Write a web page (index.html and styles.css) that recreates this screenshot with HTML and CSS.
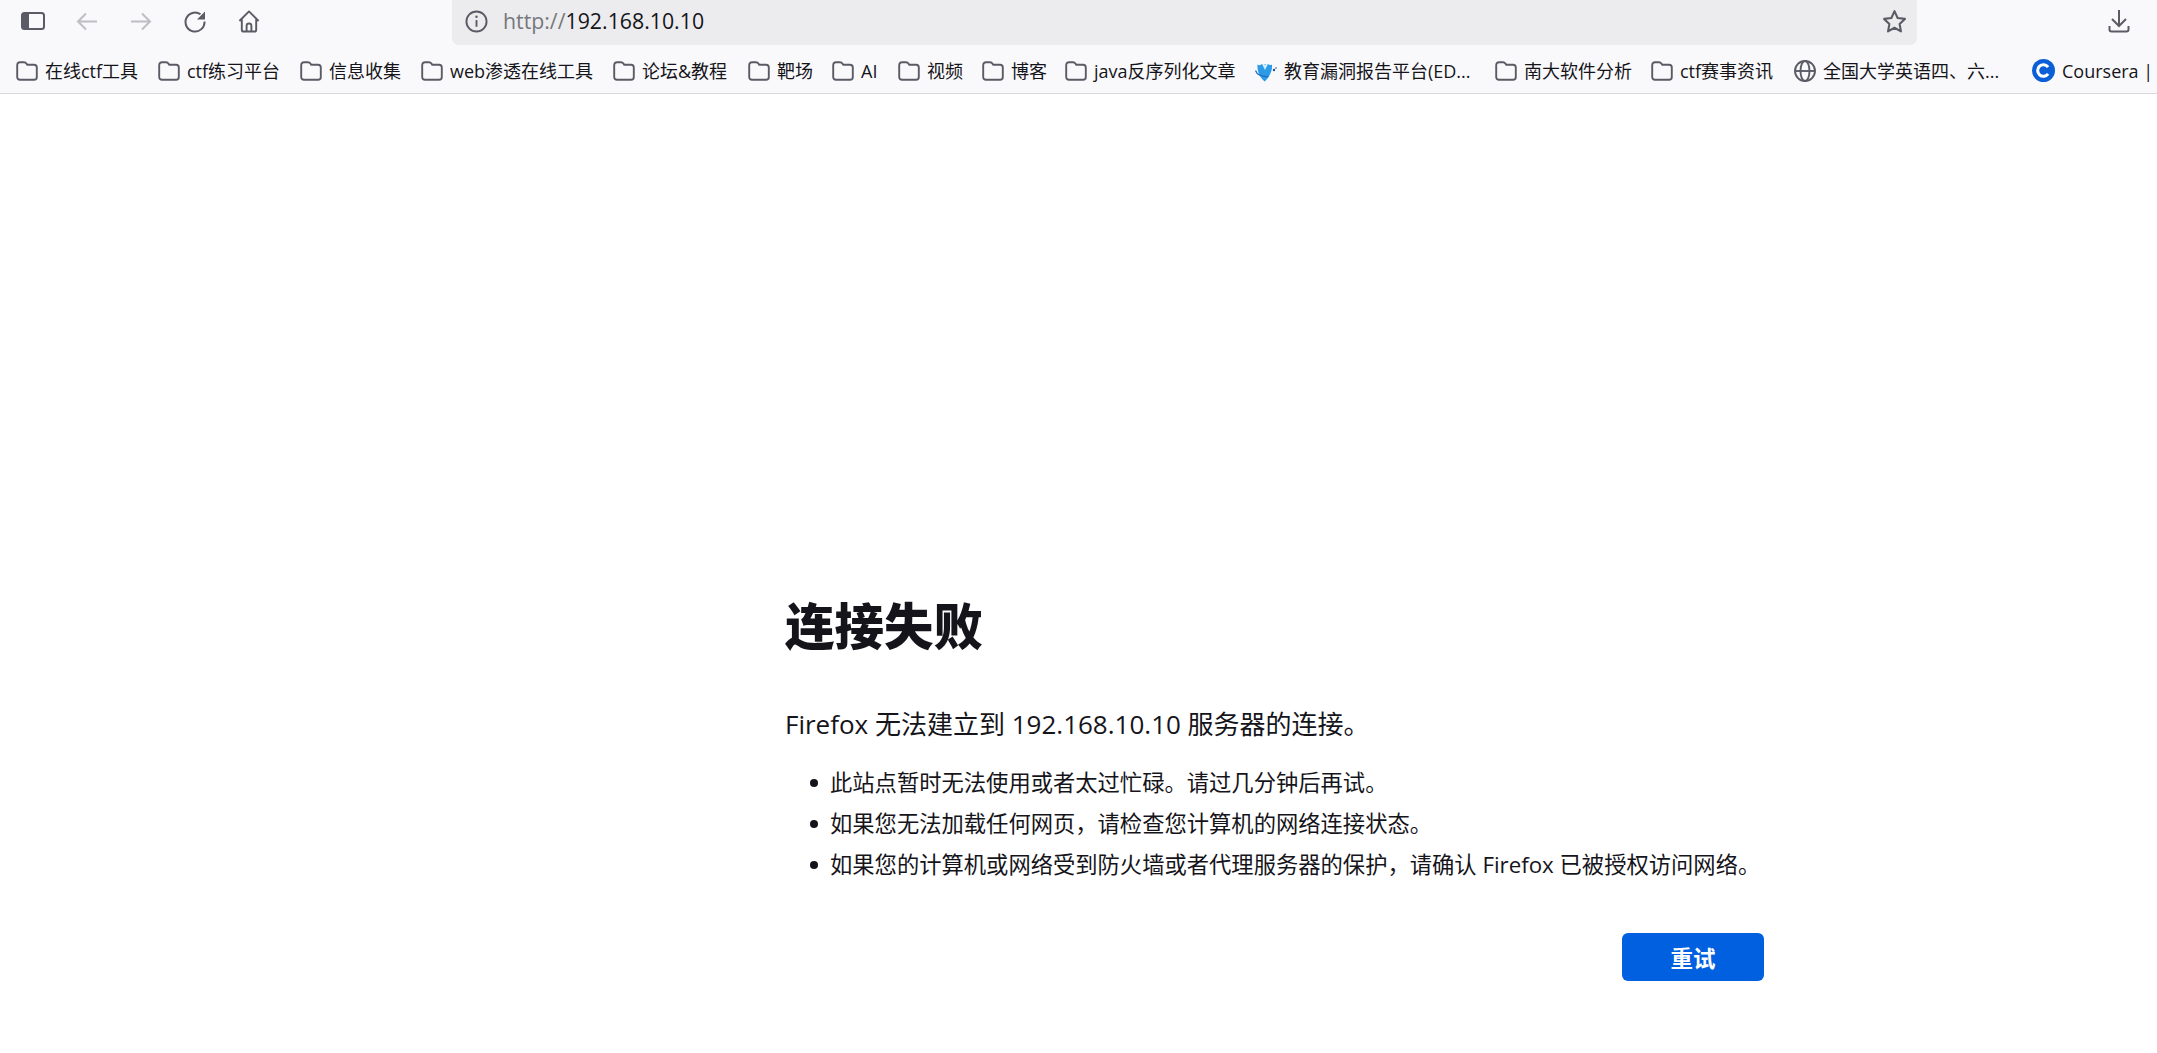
FILE: index.html
```html
<!DOCTYPE html>
<html lang="zh-CN">
<head>
<meta charset="utf-8">
<title>连接失败</title>
<link rel="stylesheet" href="styles.css">
</head>
<body>
<svg class="defs" width="0" height="0" aria-hidden="true">
  <symbol id="folder" viewBox="0 0 22 20">
    <path d="M1.2 4.2C1.2 2.4 2.4 1.2 4 1.2h4c1.2 0 1.9.5 2.6 1.6l.5.9h7c1.700 0 2.700 1.100 2.700 2.800v9.500c0 1.700-1.100 2.800-2.800 2.800H4c-1.700 0-2.800-1.100-2.800-2.800z" fill="none" stroke="#5b5b66" stroke-width="1.900" stroke-linejoin="round"/>
  </symbol>
</svg>
<header class="toolbar">
  <div class="nav">
    <svg class="ico sidebar" viewBox="0 0 24 18"><rect x="1" y="1" width="22" height="16" rx="2.500" fill="none" stroke="#5b5b66" stroke-width="2"/><path d="M2 2h6v14H2z" fill="#5b5b66"/></svg>
    <svg class="ico" viewBox="0 0 22 22"><path d="M21 11H2M10 3l-8 8 8 8" fill="none" stroke="#bebec3" stroke-width="2"/></svg>
    <svg class="ico" viewBox="0 0 22 22"><path d="M1 11h19M12 3l8 8-8 8" fill="none" stroke="#bebec3" stroke-width="2"/></svg>
    <svg class="ico" viewBox="0 0 22 22"><path d="M16.500 3.800A9.500 9.500 0 1 0 20.500 11" fill="none" stroke="#5b5b66" stroke-width="2"/><path d="M21 1v8h-8z" fill="#5b5b66"/></svg>
    <svg class="ico" viewBox="0 0 22 24"><path d="M1 11.500 11 1.500l10 10M3.500 9.500v11c0 1.200.8 2 2 2h11c1.200 0 2-.8 2-2v-11" fill="none" stroke="#5b5b66" stroke-width="2" stroke-linejoin="round"/><path d="M8.500 22v-5.500c0-1.500 1-2.500 2.500-2.500s2.500 1 2.500 2.500V22" fill="none" stroke="#5b5b66" stroke-width="2"/></svg>
  </div>
  <div class="urlbar">
    <svg class="info" viewBox="0 0 24 24"><circle cx="12" cy="12" r="10.500" fill="none" stroke="#5b5b66" stroke-width="2"/><path d="M12 10.500v7" stroke="#5b5b66" stroke-width="2"/><circle cx="12" cy="7" r="1.300" fill="#5b5b66"/></svg>
    <span class="url"><span class="scheme">http://</span>192.168.10.10</span>
    <svg class="star" viewBox="0 0 24 24"><path d="M12 2l3 6.600 7 .9-5.100 4.900 1.300 7.100L12 18l-6.200 3.500 1.300-7.100L2 9.500l7-.9z" fill="none" stroke="#5b5b66" stroke-width="2" stroke-linejoin="round"/></svg>
  </div>
  <svg class="download" viewBox="0 0 22 24"><path d="M11 1v15M4 10l7 7 7-7M1.500 17v3.500c0 1.200.8 2 2 2h15c1.200 0 2-.8 2-2V17" fill="none" stroke="#5b5b66" stroke-width="2"/></svg>
</header>
<nav class="bookmarks">
  <a class="bm b1"><svg class="fld"><use href="#folder"/></svg><span>在线ctf工具</span></a>
  <a class="bm b2"><svg class="fld"><use href="#folder"/></svg><span>ctf练习平台</span></a>
  <a class="bm b3"><svg class="fld"><use href="#folder"/></svg><span>信息收集</span></a>
  <a class="bm b4"><svg class="fld"><use href="#folder"/></svg><span>web渗透在线工具</span></a>
  <a class="bm b5"><svg class="fld"><use href="#folder"/></svg><span>论坛&amp;教程</span></a>
  <a class="bm b6"><svg class="fld"><use href="#folder"/></svg><span>靶场</span></a>
  <a class="bm b7"><svg class="fld"><use href="#folder"/></svg><span>AI</span></a>
  <a class="bm b8"><svg class="fld"><use href="#folder"/></svg><span>视频</span></a>
  <a class="bm b9"><svg class="fld"><use href="#folder"/></svg><span>博客</span></a>
  <a class="bm b10"><svg class="fld"><use href="#folder"/></svg><span>java反序列化文章</span></a>
  <a class="bm b11"><svg class="fav" viewBox="0 0 22 22"><path d="M2.500 4.500c1.500 1 3.500.8 4.500-.5 1 1.200 2.500 1.200 3 0 1 1.200 2.500 1.200 3 0 1 1.200 2.500 1.500 4 .5.500 6-2 12-7.200 17C4.500 17.500 2 10.500 2.500 4.500z" fill="#2b9be8"/><path d="M7.500 5l2.500 5 2.500-5z" fill="#d5eefc"/><path d="M.5 10.500c1 4 6 6.500 13 6" fill="none" stroke="#1f6fc4" stroke-width="1.300"/><circle cx="19" cy="10" r="1.200" fill="#1c4f9c"/><circle cx="21" cy="8" r=".8" fill="#1c4f9c"/></svg><span>教育漏洞报告平台(ED...</span></a>
  <a class="bm b12"><svg class="fld"><use href="#folder"/></svg><span>南大软件分析</span></a>
  <a class="bm b13"><svg class="fld"><use href="#folder"/></svg><span>ctf赛事资讯</span></a>
  <a class="bm b14"><svg class="fav" viewBox="0 0 22 22"><g fill="none" stroke="#5b5b66" stroke-width="1.900"><circle cx="11" cy="11" r="10"/><ellipse cx="11" cy="11" rx="4.500" ry="10"/><path d="M1 11h20"/></g></svg><span>全国大学英语四、六...</span></a>
  <a class="bm b15"><svg class="fav course" viewBox="0 0 24 24"><circle cx="12" cy="12" r="12" fill="#0b5fd6"/><path d="M16.800 8.500a6 6 0 1 0 0 7" fill="none" stroke="#fff" stroke-width="3.200"/></svg><span>Coursera |</span></a>
</nav>
<main class="page">
  <div class="error">
    <h1 class="title">连接失败</h1>
    <p class="lead">Firefox 无法建立到 192.168.10.10 服务器的连接。</p>
    <ul class="tips">
      <li>此站点暂时无法使用或者太过忙碌。请过几分钟后再试。</li>
      <li>如果您无法加载任何网页，请检查您计算机的网络连接状态。</li>
      <li>如果您的计算机或网络受到防火墙或者代理服务器的保护，请确认 Firefox 已被授权访问网络。</li>
    </ul>
    <div class="actions"><button class="retry" type="button">重试</button></div>
  </div>
</main>
</body>
</html>
```

FILE: styles.css
```css
* { box-sizing: border-box; }
html, body { margin: 0; height: 100%; }
body {
  background: #fff;
  color: #15141a;
  font-family: "Open Sans", "Noto Sans CJK SC", sans-serif;
  overflow: hidden;
}
.defs { position: absolute; }

.toolbar {
  display: flex;
  align-items: flex-start;
  height: 45px;
  background: #f9f9fb;
  padding-left: 21px;
}
.nav {
  display: flex;
  align-items: center;
  gap: 32px;
  height: 42px;
}
.ico { width: 22px; height: 23px; flex: none; }
.sidebar { width: 24px; height: 18px; margin-right: -1px; }

.urlbar {
  display: flex;
  align-items: center;
  width: 1465px;
  height: 45px;
  margin-left: 192px;
  padding: 0 10px 3px 13px;
  background: #ececee;
  border-radius: 0 0 7px 7px;
}
.info { width: 23px; height: 23px; flex: none; }
.url {
  margin-left: 15px;
  font-size: 21.300px;
  line-height: 28px;
  color: #15141a;
}
.scheme { color: #77777d; }
.star { width: 25px; height: 25px; margin-left: auto; }
.download { width: 22px; height: 24px; margin: 9px 0 0 191px; }

.bookmarks {
  display: flex;
  align-items: center;
  height: 49px;
  padding: 3px 0 0 16px;
  background: #f9f9fb;
  border-bottom: 1px solid #d9d9dd;
  overflow: hidden;
  white-space: nowrap;
}
.bm {
  display: flex;
  align-items: center;
  flex: none;
  gap: 7px;
  font-size: 18px;
  line-height: 24px;
  color: #15141a;
}
.fld { width: 22px; height: 20px; flex: none; }
.fav { width: 22px; height: 22px; flex: none; }
.course { width: 23px; height: 23px; }
.b1 { width: 142px; }
.b2 { width: 142px; }
.b3 { width: 121px; }
.b4 { width: 192px; }
.b5 { width: 135px; }
.b6 { width: 84px; }
.b7 { width: 66px; }
.b8 { width: 84px; }
.b9 { width: 83px; }
.b10 { width: 190px; }
.b11 { width: 240px; }
.b12 { width: 156px; }
.b13 { width: 143px; }
.b14 { width: 238px; }

.page { padding: 506px 0 0 785px; }
.error { width: 979px; }
.title {
  margin: 0;
  font-size: 49.500px;
  line-height: 52px;
  font-weight: 900;
}
.lead {
  margin: 52px 0 0;
  font-size: 26px;
  line-height: 40px;
}
.tips {
  margin: 18px 0 0;
  padding: 0 0 0 25px;
  list-style: none;
  font-size: 22.300px;
  line-height: 41px;
  white-space: nowrap;
}
.tips li {
  display: flex;
  align-items: center;
  gap: 12px;
}
.tips li::before {
  content: "";
  flex: none;
  width: 8px;
  height: 8px;
  border-radius: 50%;
  background: #15141a;
}
.actions {
  display: flex;
  justify-content: flex-end;
  margin-top: 48px;
}
.retry {
  width: 142px;
  height: 48px;
  border: 0;
  border-radius: 6px;
  background: #0060df;
  color: #fff;
  font: 700 22.500px "Open Sans", "Noto Sans CJK SC", sans-serif;
}
```
